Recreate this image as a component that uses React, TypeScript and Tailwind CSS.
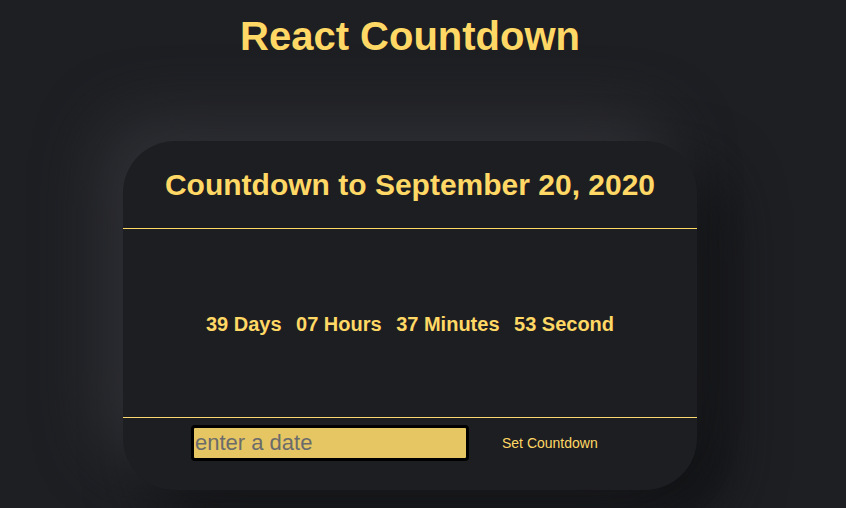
import { useState } from "react";

export default function App() {
  const [date, setDate] = useState("");

  return (
    <main
      className="min-h-screen bg-[#1e1f23] overflow-hidden"
      style={{ fontFamily: '"Liberation Sans", Arial, sans-serif' }}
    >
      <div className="w-[820px] flex flex-col items-center">
        <h1 className="mt-[13px] text-[40px] leading-[46px] font-bold text-[#ffd865]">React Countdown</h1>

        {/* Card */}
        <div className="mt-[82px] w-[574px] rounded-[52px] bg-[#1d1e22] shadow-[-25px_-25px_60px_#2e2f34,25px_25px_60px_#0f1012] flex flex-col">
          <div className="h-[88px] flex items-center justify-center border-b border-[#ffd865]">
            <h2 className="text-[30px] font-bold text-[#ffd865]">Countdown to September 20, 2020</h2>
          </div>

          <div className="h-[189px] pt-[2px] flex items-center justify-center gap-[14.5px] border-b border-[#fcd970] text-[20px] font-bold text-[#ffd865]">
            <span>39 Days</span>
            <span>07 Hours</span>
            <span>37 Minutes</span>
            <span>53 Second</span>
          </div>

          <div className="h-[72px] flex items-start pt-[7px] pl-[68px]">
            <input
              type="text"
              value={date}
              onChange={(e) => setDate(e.target.value)}
              placeholder="enter a date"
              className="w-[278px] h-[36px] bg-[#e6c663] border-[3px] border-black rounded-[4px] px-[1px] text-[22px] text-[#333] placeholder:text-[#6b6b6b] outline-none"
            />
            <button className="ml-[33px] h-[36px] text-[14px] text-[#ffd865]">Set Countdown</button>
          </div>
        </div>
      </div>
    </main>
  );
}
